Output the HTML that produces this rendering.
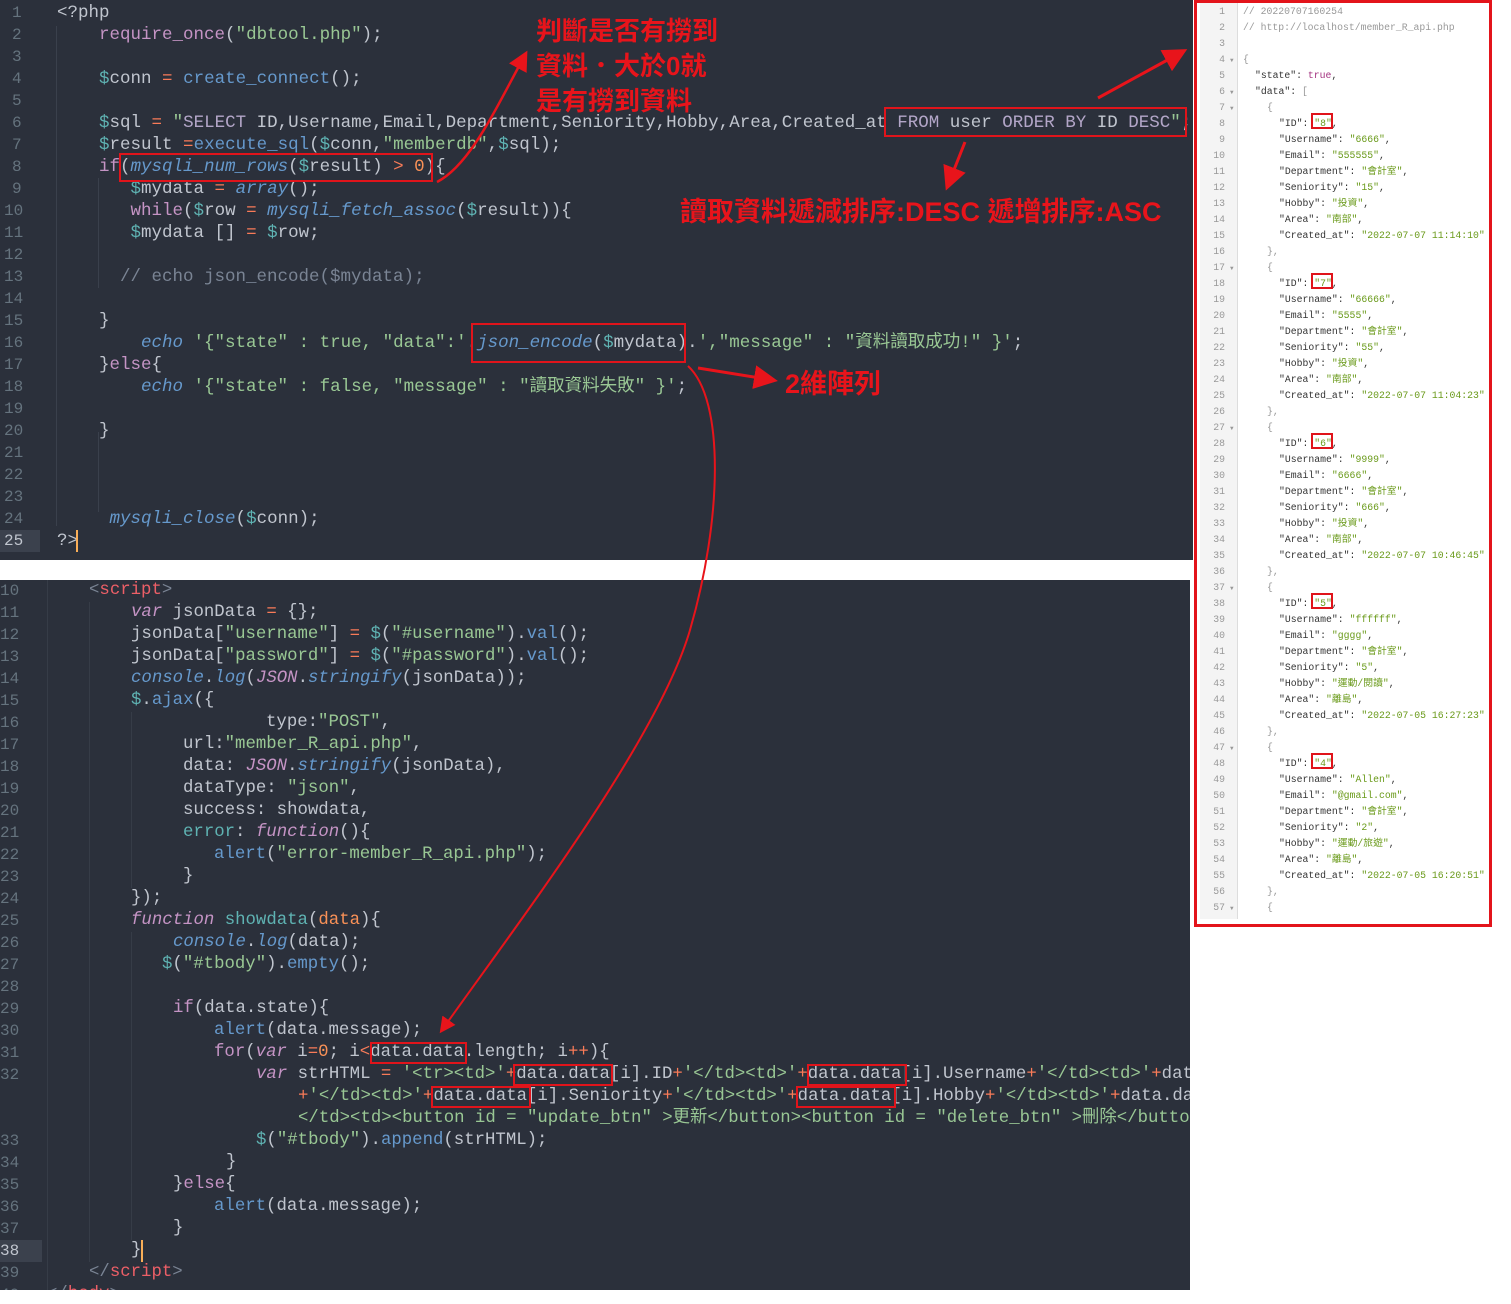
<!DOCTYPE html>
<html><head><meta charset="utf-8">
<style>
*{margin:0;padding:0;box-sizing:border-box}
body{width:1511px;height:1304px;background:#fff;position:relative;overflow:hidden;font-family:"Liberation Mono","Noto Sans CJK TC",monospace}
.ed{position:absolute;background:#2b303b;overflow:hidden}
.l{position:absolute;white-space:pre;color:#c0c5ce;height:22px;line-height:22px}
.top .l{font-size:17.5px}
.bot .l{font-size:17.35px}
.n{position:absolute;white-space:pre;color:#65737e;height:22px;line-height:22px}
.k{color:#c594c5}.ki{color:#c594c5;font-style:italic}
.v{color:#5fb3b3}.f{color:#6699cc}.fi{color:#6699cc;font-style:italic}
.s{color:#99c794}.o{color:#f97b58}.nm{color:#f99157}.c{color:#7a8494}
.t{color:#ec5f67}.q{color:#b3a6c8}
.box{position:absolute;border:2.5px solid #e0141b}
.ann{position:absolute;color:#e8141b;font-family:"Liberation Sans","Noto Sans CJK TC",sans-serif;font-weight:bold;white-space:nowrap}
.rp{position:absolute;left:1194px;top:0;width:298px;height:927px;border:3px solid #e3141b;background:#fff;overflow:hidden}
.gut{position:absolute;left:3px;top:0;width:38px;height:916px;background:#f4f4f4;border-right:1px solid #ddd}
.j{position:absolute;white-space:pre;font-size:9.8px;line-height:16px;height:16px;color:#333}
.jn{position:absolute;white-space:pre;font-size:9.8px;line-height:16px;height:16px;color:#999;text-align:right;width:24px;left:4px}
.js{color:#6a9a1a}.jc{color:#999}.jt{color:#a3317f}
.fold{position:absolute;font-size:6px;color:#999;left:33px}
</style></head><body>

<div class="ed top" style="left:0;top:0;width:1193px;height:560px">
<div class="n" style="left:12px;top:2px">1</div><div class="n" style="left:12px;top:24px">2</div><div class="n" style="left:12px;top:46px">3</div><div class="n" style="left:12px;top:68px">4</div><div class="n" style="left:12px;top:90px">5</div><div class="n" style="left:12px;top:112px">6</div><div class="n" style="left:12px;top:134px">7</div><div class="n" style="left:12px;top:156px">8</div><div class="n" style="left:12px;top:178px">9</div>
<div class="n" style="left:4px;top:200px">10</div><div class="n" style="left:4px;top:222px">11</div><div class="n" style="left:4px;top:244px">12</div><div class="n" style="left:4px;top:266px">13</div><div class="n" style="left:4px;top:288px">14</div><div class="n" style="left:4px;top:310px">15</div><div class="n" style="left:4px;top:332px">16</div><div class="n" style="left:4px;top:354px">17</div><div class="n" style="left:4px;top:376px">18</div><div class="n" style="left:4px;top:398px">19</div><div class="n" style="left:4px;top:420px">20</div><div class="n" style="left:4px;top:442px">21</div><div class="n" style="left:4px;top:464px">22</div><div class="n" style="left:4px;top:486px">23</div><div class="n" style="left:4px;top:508px">24</div>
<div style="position:absolute;left:0;top:530px;width:40px;height:22px;background:#3b414d"></div>
<div class="n" style="left:4px;top:530px;color:#c0c5ce">25</div>
<div style="position:absolute;left:56px;top:26px;width:1px;height:500px;background:#3a404c"></div>
<div style="position:absolute;left:98px;top:178px;width:1px;height:110px;background:#3a404c"></div>
<div style="position:absolute;left:98px;top:432px;width:1px;height:80px;background:#3a404c"></div>

<div class="l" style="left:57px;top:2px">&lt;?php</div>
<div class="l" style="left:57px;top:24px">    <span class="k">require_once</span>(<span class="s">"dbtool.php"</span>);</div>
<div class="l" style="left:57px;top:68px">    <span class="v">$</span>conn <span class="o">=</span> <span class="f">create_connect</span>();</div>
<div class="l" style="left:57px;top:112px">    <span class="v">$</span>sql <span class="o">=</span> <span class="s">"</span><span class="q">SELECT</span> ID,Username,Email,Department,Seniority,Hobby,Area,Created_at <span class="q">FROM</span> user <span class="q">ORDER BY</span> ID <span class="q">DESC</span><span class="s">"</span>;</div>
<div class="l" style="left:57px;top:134px">    <span class="v">$</span>result <span class="o">=</span><span class="f">execute_sql</span>(<span class="v">$</span>conn,<span class="s">"memberdb"</span>,<span class="v">$</span>sql);</div>
<div class="l" style="left:57px;top:156px">    <span class="k">if</span>(<span class="fi">mysqli_num_rows</span>(<span class="v">$</span>result) <span class="o">&gt;</span> <span class="nm">0</span>){</div>
<div class="l" style="left:57px;top:178px">       <span class="v">$</span>mydata <span class="o">=</span> <span class="fi">array</span>();</div>
<div class="l" style="left:57px;top:200px">       <span class="k">while</span>(<span class="v">$</span>row <span class="o">=</span> <span class="fi">mysqli_fetch_assoc</span>(<span class="v">$</span>result)){</div>
<div class="l" style="left:57px;top:222px">       <span class="v">$</span>mydata [] <span class="o">=</span> <span class="v">$</span>row;</div>
<div class="l" style="left:57px;top:266px">      <span class="c">// echo json_encode($mydata);</span></div>
<div class="l" style="left:57px;top:310px">    }</div>
<div class="l" style="left:57px;top:332px">        <span class="fi">echo</span> <span class="s">'{"state" : true, "data":'</span>.<span class="fi">json_encode</span>(<span class="v">$</span>mydata).<span class="s">',"message" : "資料讀取成功!" }'</span>;</div>
<div class="l" style="left:57px;top:354px">    }<span class="k">else</span>{</div>
<div class="l" style="left:57px;top:376px">        <span class="fi">echo</span> <span class="s">'{"state" : false, "message" : "讀取資料失敗" }'</span>;</div>
<div class="l" style="left:57px;top:420px">    }</div>
<div class="l" style="left:57px;top:508px">     <span class="fi">mysqli_close</span>(<span class="v">$</span>conn);</div>
<div class="l" style="left:57px;top:530px">?&gt;</div>
<div style="position:absolute;left:76px;top:530px;width:2px;height:22px;background:#f9ae58"></div>
</div>

<div class="ed bot" style="left:0;top:580px;width:1190px;height:710px">
<div class="n" style="left:0;top:0">10</div><div class="n" style="left:0;top:22px">11</div><div class="n" style="left:0;top:44px">12</div><div class="n" style="left:0;top:66px">13</div><div class="n" style="left:0;top:88px">14</div><div class="n" style="left:0;top:110px">15</div><div class="n" style="left:0;top:132px">16</div><div class="n" style="left:0;top:154px">17</div><div class="n" style="left:0;top:176px">18</div><div class="n" style="left:0;top:198px">19</div><div class="n" style="left:0;top:220px">20</div><div class="n" style="left:0;top:242px">21</div><div class="n" style="left:0;top:264px">22</div><div class="n" style="left:0;top:286px">23</div><div class="n" style="left:0;top:308px">24</div><div class="n" style="left:0;top:330px">25</div><div class="n" style="left:0;top:352px">26</div><div class="n" style="left:0;top:374px">27</div><div class="n" style="left:0;top:396px">28</div><div class="n" style="left:0;top:418px">29</div><div class="n" style="left:0;top:440px">30</div><div class="n" style="left:0;top:462px">31</div><div class="n" style="left:0;top:484px">32</div><div class="n" style="left:0;top:550px">33</div><div class="n" style="left:0;top:572px">34</div><div class="n" style="left:0;top:594px">35</div><div class="n" style="left:0;top:616px">36</div><div class="n" style="left:0;top:638px">37</div>
<div style="position:absolute;left:0;top:660px;width:42px;height:22px;background:#3b414d"></div>
<div class="n" style="left:0;top:660px;color:#c0c5ce">38</div><div class="n" style="left:0;top:682px">39</div><div class="n" style="left:0;top:704px">40</div>
<div style="position:absolute;left:47px;top:0;width:1px;height:710px;background:#363c47"></div>
<div style="position:absolute;left:89px;top:22px;width:1px;height:660px;background:#363c47"></div>
<div style="position:absolute;left:131px;top:132px;width:1px;height:176px;background:#363c47"></div>
<div style="position:absolute;left:131px;top:352px;width:1px;height:308px;background:#363c47"></div>

<div class="l" style="left:89px;top:0"><span class="c">&lt;</span><span class="t">script</span><span class="c">&gt;</span></div>
<div class="l" style="left:131px;top:22px"><span class="ki">var</span> jsonData <span class="o">=</span> {};</div>
<div class="l" style="left:131px;top:44px">jsonData[<span class="s">"username"</span>] <span class="o">=</span> <span class="v">$</span>(<span class="s">"#username"</span>).<span class="f">val</span>();</div>
<div class="l" style="left:131px;top:66px">jsonData[<span class="s">"password"</span>] <span class="o">=</span> <span class="v">$</span>(<span class="s">"#password"</span>).<span class="f">val</span>();</div>
<div class="l" style="left:131px;top:88px"><span class="fi">console</span>.<span class="fi">log</span>(<span class="ki">JSON</span>.<span class="fi">stringify</span>(jsonData));</div>
<div class="l" style="left:131px;top:110px"><span class="v">$</span>.<span class="f">ajax</span>({</div>
<div class="l" style="left:266px;top:132px">type:<span class="s">"POST"</span>,</div>
<div class="l" style="left:183px;top:154px">url:<span class="s">"member_R_api.php"</span>,</div>
<div class="l" style="left:183px;top:176px">data: <span class="ki">JSON</span>.<span class="fi">stringify</span>(jsonData),</div>
<div class="l" style="left:183px;top:198px">dataType: <span class="s">"json"</span>,</div>
<div class="l" style="left:183px;top:220px">success: showdata,</div>
<div class="l" style="left:183px;top:242px"><span class="v">error</span>: <span class="ki">function</span>(){</div>
<div class="l" style="left:214px;top:264px"><span class="f">alert</span>(<span class="s">"error-member_R_api.php"</span>);</div>
<div class="l" style="left:183px;top:286px">}</div>
<div class="l" style="left:131px;top:308px">});</div>
<div class="l" style="left:131px;top:330px"><span class="ki">function</span> <span class="v">showdata</span>(<span class="nm">data</span>){</div>
<div class="l" style="left:173px;top:352px"><span class="fi">console</span>.<span class="fi">log</span>(data);</div>
<div class="l" style="left:162px;top:374px"><span class="v">$</span>(<span class="s">"#tbody"</span>).<span class="f">empty</span>();</div>
<div class="l" style="left:173px;top:418px"><span class="k">if</span>(data.state){</div>
<div class="l" style="left:214px;top:440px"><span class="f">alert</span>(data.message);</div>
<div class="l" style="left:214px;top:462px"><span class="k">for</span>(<span class="ki">var</span> i<span class="o">=</span><span class="nm">0</span>; i<span class="o">&lt;</span>data.data.length; i<span class="o">++</span>){</div>
<div class="l" style="left:256px;top:484px"><span class="ki">var</span> strHTML <span class="o">=</span> <span class="s">'&lt;tr&gt;&lt;td&gt;'</span><span class="o">+</span>data.data[i].ID<span class="o">+</span><span class="s">'&lt;/td&gt;&lt;td&gt;'</span><span class="o">+</span>data.data[i].Username<span class="o">+</span><span class="s">'&lt;/td&gt;&lt;td&gt;'</span><span class="o">+</span>data.data[i].Department</div>
<div class="l" style="left:298px;top:506px"><span class="o">+</span><span class="s">'&lt;/td&gt;&lt;td&gt;'</span><span class="o">+</span>data.data[i].Seniority<span class="o">+</span><span class="s">'&lt;/td&gt;&lt;td&gt;'</span><span class="o">+</span>data.data[i].Hobby<span class="o">+</span><span class="s">'&lt;/td&gt;&lt;td&gt;'</span><span class="o">+</span>data.data[i].Area</div>
<div class="l" style="left:298px;top:528px"><span class="s">&lt;/td&gt;&lt;td&gt;&lt;button id = "update_btn" &gt;更新&lt;/button&gt;&lt;button id = "delete_btn" &gt;刪除&lt;/button&gt;</span></div>
<div class="l" style="left:256px;top:550px"><span class="v">$</span>(<span class="s">"#tbody"</span>).<span class="f">append</span>(strHTML);</div>
<div class="l" style="left:226px;top:572px">}</div>
<div class="l" style="left:173px;top:594px">}<span class="k">else</span>{</div>
<div class="l" style="left:214px;top:616px"><span class="f">alert</span>(data.message);</div>
<div class="l" style="left:173px;top:638px">}</div>
<div class="l" style="left:131px;top:660px">}</div>
<div style="position:absolute;left:141px;top:660px;width:2px;height:22px;background:#f9ae58"></div>
<div class="l" style="left:89px;top:682px"><span class="c">&lt;/</span><span class="t">script</span><span class="c">&gt;</span></div>
<div class="l" style="left:47px;top:704px"><span class="c">&lt;/</span><span class="t">body</span><span class="c">&gt;</span></div>
</div>

<div class="rp">
<div class="gut"></div>
<div class="jn" style="top:1px">1</div><div class="j" style="left:46px;top:1px"><span class="jc">// 20220707160254</span></div>
<div class="jn" style="top:17px">2</div><div class="j" style="left:46px;top:17px"><span class="jc">// http://localhost/member_R_api.php</span></div>
<div class="jn" style="top:33px">3</div>
<div class="jn" style="top:49px">4</div><div class="fold" style="top:54px">▼</div><div class="j" style="left:46px;top:49px"><span class="jc">{</span></div>
<div class="jn" style="top:65px">5</div><div class="j" style="left:58px;top:65px">"state": <span class="jt">true</span>,</div>
<div class="jn" style="top:81px">6</div><div class="fold" style="top:86px">▼</div><div class="j" style="left:58px;top:81px">"data": <span class="jc">[</span></div>

<div class="jn" style="top:97px">7</div><div class="fold" style="top:102px">▼</div><div class="j" style="left:70px;top:97px"><span class="jc">{</span></div>
<div class="jn" style="top:113px">8</div><div class="j" style="left:82px;top:113px">"ID": <span class="js">"8"</span>,</div>
<div class="jn" style="top:129px">9</div><div class="j" style="left:82px;top:129px">"Username": <span class="js">"6666"</span>,</div>
<div class="jn" style="top:145px">10</div><div class="j" style="left:82px;top:145px">"Email": <span class="js">"555555"</span>,</div>
<div class="jn" style="top:161px">11</div><div class="j" style="left:82px;top:161px">"Department": <span class="js">"會計室"</span>,</div>
<div class="jn" style="top:177px">12</div><div class="j" style="left:82px;top:177px">"Seniority": <span class="js">"15"</span>,</div>
<div class="jn" style="top:193px">13</div><div class="j" style="left:82px;top:193px">"Hobby": <span class="js">"投資"</span>,</div>
<div class="jn" style="top:209px">14</div><div class="j" style="left:82px;top:209px">"Area": <span class="js">"南部"</span>,</div>
<div class="jn" style="top:225px">15</div><div class="j" style="left:82px;top:225px">"Created_at": <span class="js">"2022-07-07 11:14:10"</span></div>
<div class="jn" style="top:241px">16</div><div class="j" style="left:70px;top:241px"><span class="jc">},</span></div>

<div class="jn" style="top:257px">17</div><div class="fold" style="top:262px">▼</div><div class="j" style="left:70px;top:257px"><span class="jc">{</span></div>
<div class="jn" style="top:273px">18</div><div class="j" style="left:82px;top:273px">"ID": <span class="js">"7"</span>,</div>
<div class="jn" style="top:289px">19</div><div class="j" style="left:82px;top:289px">"Username": <span class="js">"66666"</span>,</div>
<div class="jn" style="top:305px">20</div><div class="j" style="left:82px;top:305px">"Email": <span class="js">"5555"</span>,</div>
<div class="jn" style="top:321px">21</div><div class="j" style="left:82px;top:321px">"Department": <span class="js">"會計室"</span>,</div>
<div class="jn" style="top:337px">22</div><div class="j" style="left:82px;top:337px">"Seniority": <span class="js">"55"</span>,</div>
<div class="jn" style="top:353px">23</div><div class="j" style="left:82px;top:353px">"Hobby": <span class="js">"投資"</span>,</div>
<div class="jn" style="top:369px">24</div><div class="j" style="left:82px;top:369px">"Area": <span class="js">"南部"</span>,</div>
<div class="jn" style="top:385px">25</div><div class="j" style="left:82px;top:385px">"Created_at": <span class="js">"2022-07-07 11:04:23"</span></div>
<div class="jn" style="top:401px">26</div><div class="j" style="left:70px;top:401px"><span class="jc">},</span></div>

<div class="jn" style="top:417px">27</div><div class="fold" style="top:422px">▼</div><div class="j" style="left:70px;top:417px"><span class="jc">{</span></div>
<div class="jn" style="top:433px">28</div><div class="j" style="left:82px;top:433px">"ID": <span class="js">"6"</span>,</div>
<div class="jn" style="top:449px">29</div><div class="j" style="left:82px;top:449px">"Username": <span class="js">"9999"</span>,</div>
<div class="jn" style="top:465px">30</div><div class="j" style="left:82px;top:465px">"Email": <span class="js">"6666"</span>,</div>
<div class="jn" style="top:481px">31</div><div class="j" style="left:82px;top:481px">"Department": <span class="js">"會計室"</span>,</div>
<div class="jn" style="top:497px">32</div><div class="j" style="left:82px;top:497px">"Seniority": <span class="js">"666"</span>,</div>
<div class="jn" style="top:513px">33</div><div class="j" style="left:82px;top:513px">"Hobby": <span class="js">"投資"</span>,</div>
<div class="jn" style="top:529px">34</div><div class="j" style="left:82px;top:529px">"Area": <span class="js">"南部"</span>,</div>
<div class="jn" style="top:545px">35</div><div class="j" style="left:82px;top:545px">"Created_at": <span class="js">"2022-07-07 10:46:45"</span></div>
<div class="jn" style="top:561px">36</div><div class="j" style="left:70px;top:561px"><span class="jc">},</span></div>

<div class="jn" style="top:577px">37</div><div class="fold" style="top:582px">▼</div><div class="j" style="left:70px;top:577px"><span class="jc">{</span></div>
<div class="jn" style="top:593px">38</div><div class="j" style="left:82px;top:593px">"ID": <span class="js">"5"</span>,</div>
<div class="jn" style="top:609px">39</div><div class="j" style="left:82px;top:609px">"Username": <span class="js">"ffffff"</span>,</div>
<div class="jn" style="top:625px">40</div><div class="j" style="left:82px;top:625px">"Email": <span class="js">"gggg"</span>,</div>
<div class="jn" style="top:641px">41</div><div class="j" style="left:82px;top:641px">"Department": <span class="js">"會計室"</span>,</div>
<div class="jn" style="top:657px">42</div><div class="j" style="left:82px;top:657px">"Seniority": <span class="js">"5"</span>,</div>
<div class="jn" style="top:673px">43</div><div class="j" style="left:82px;top:673px">"Hobby": <span class="js">"運動/閱讀"</span>,</div>
<div class="jn" style="top:689px">44</div><div class="j" style="left:82px;top:689px">"Area": <span class="js">"離島"</span>,</div>
<div class="jn" style="top:705px">45</div><div class="j" style="left:82px;top:705px">"Created_at": <span class="js">"2022-07-05 16:27:23"</span></div>
<div class="jn" style="top:721px">46</div><div class="j" style="left:70px;top:721px"><span class="jc">},</span></div>

<div class="jn" style="top:737px">47</div><div class="fold" style="top:742px">▼</div><div class="j" style="left:70px;top:737px"><span class="jc">{</span></div>
<div class="jn" style="top:753px">48</div><div class="j" style="left:82px;top:753px">"ID": <span class="js">"4"</span>,</div>
<div class="jn" style="top:769px">49</div><div class="j" style="left:82px;top:769px">"Username": <span class="js">"Allen"</span>,</div>
<div class="jn" style="top:785px">50</div><div class="j" style="left:82px;top:785px">"Email": <span class="js">"@gmail.com"</span>,</div>
<div class="jn" style="top:801px">51</div><div class="j" style="left:82px;top:801px">"Department": <span class="js">"會計室"</span>,</div>
<div class="jn" style="top:817px">52</div><div class="j" style="left:82px;top:817px">"Seniority": <span class="js">"2"</span>,</div>
<div class="jn" style="top:833px">53</div><div class="j" style="left:82px;top:833px">"Hobby": <span class="js">"運動/旅遊"</span>,</div>
<div class="jn" style="top:849px">54</div><div class="j" style="left:82px;top:849px">"Area": <span class="js">"離島"</span>,</div>
<div class="jn" style="top:865px">55</div><div class="j" style="left:82px;top:865px">"Created_at": <span class="js">"2022-07-05 16:20:51"</span></div>
<div class="jn" style="top:881px">56</div><div class="j" style="left:70px;top:881px"><span class="jc">},</span></div>
<div class="jn" style="top:897px">57</div><div class="fold" style="top:902px">▼</div><div class="j" style="left:70px;top:897px"><span class="jc">{</span></div>
</div>

<div class="box" style="left:1311px;top:113px;width:22px;height:16px;border-width:2px"></div>
<div class="box" style="left:1311px;top:273px;width:22px;height:16px;border-width:2px"></div>
<div class="box" style="left:1311px;top:433px;width:22px;height:16px;border-width:2px"></div>
<div class="box" style="left:1311px;top:593px;width:22px;height:16px;border-width:2px"></div>
<div class="box" style="left:1311px;top:753px;width:22px;height:16px;border-width:2px"></div>

<div class="box" style="left:119px;top:153px;width:314px;height:29px"></div>
<div class="box" style="left:884px;top:107px;width:303px;height:30px"></div>
<div class="box" style="left:471px;top:323px;width:215px;height:40px"></div>
<div class="box" style="left:370px;top:1042px;width:97px;height:22px;border-width:2px"></div>
<div class="box" style="left:513px;top:1064px;width:100px;height:22px;border-width:2px"></div>
<div class="box" style="left:807px;top:1064px;width:100px;height:22px;border-width:2px"></div>
<div class="box" style="left:431px;top:1086px;width:100px;height:22px;border-width:2px"></div>
<div class="box" style="left:796px;top:1086px;width:100px;height:22px;border-width:2px"></div>

<div class="ann" style="left:536px;top:15px;font-size:26px;line-height:32px">判斷是否有撈到</div>
<div class="ann" style="left:536px;top:50px;font-size:26px;line-height:32px">資料．大於0就</div>
<div class="ann" style="left:536px;top:85px;font-size:26px;line-height:32px">是有撈到資料</div>
<div class="ann" style="left:680px;top:195px;font-size:27px;line-height:34px">讀取資料遞減排序:DESC 遞增排序:ASC</div>
<div class="ann" style="left:785px;top:367px;font-size:27px;line-height:34px">2維陣列</div>

<svg width="1511" height="1304" style="position:absolute;left:0;top:0" viewBox="0 0 1511 1304">
<defs><marker id="ah" markerWidth="8" markerHeight="8" refX="6" refY="4" orient="auto" markerUnits="strokeWidth"><path d="M0,0 L8,4 L0,8 z" fill="#e8141b"/></marker></defs>
<g fill="none" stroke="#e8141b" stroke-width="2.5">
<path d="M437,182 C470,165 495,110 525,55" marker-end="url(#ah)"/>
<path d="M1098,98 L1182,52" stroke-width="3" marker-end="url(#ah)"/>
<path d="M965,142 L948,185" stroke-width="3" marker-end="url(#ah)"/>
<path d="M698,368 L772,380" stroke-width="3" marker-end="url(#ah)"/>
<path d="M688,366 C725,400 722,520 690,630 S520,920 442,1030" stroke-width="2" marker-end="url(#ah)"/>
</g>
</svg>
</body></html>
